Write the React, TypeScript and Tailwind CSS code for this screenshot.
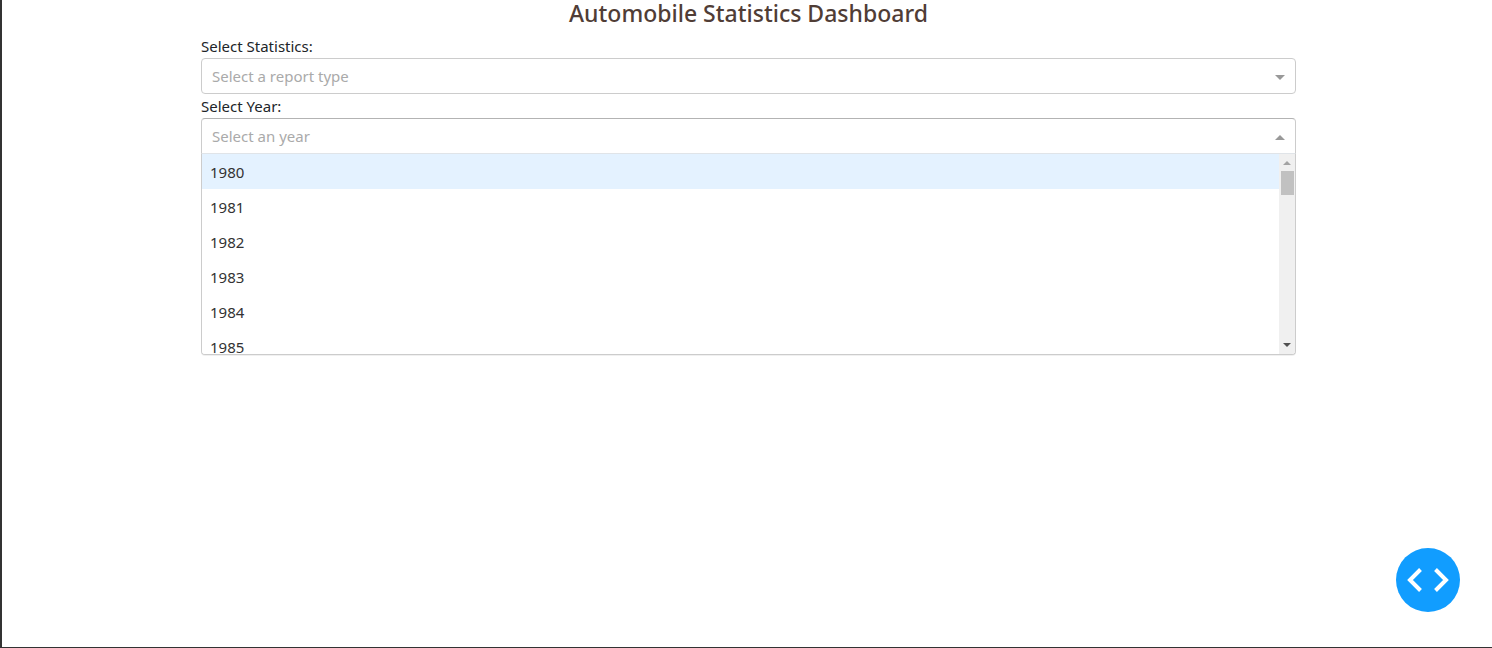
import { useState } from "react";

const YEARS = Array.from({ length: 34 }, (_, i) => String(1980 + i));
const REPORTS = ["Yearly Statistics", "Recession Period Statistics"];

function Caret({ up = false }: { up?: boolean }) {
  return (
    <svg
      aria-hidden="true"
      viewBox="0 0 10 8"
      className="pointer-events-none h-2 w-[10px] shrink-0 fill-[#999999]"
    >
      <path d={up ? "M0 8 5 3 10 8Z" : "M0 3 5 8 10 3Z"} />
    </svg>
  );
}

function ScrollTrack() {
  return (
    <div aria-hidden="true" className="flex w-4 shrink-0 flex-col items-center bg-[#f0f0f0] pt-[7px] pb-[7px]">
      <svg viewBox="0 0 8 4" className="h-1 w-2 shrink-0 fill-[#a3a3a3]">
        <path d="M0 4 4 0 8 4Z" />
      </svg>
      <div className="mt-[6px] h-6 w-[13px] shrink-0 bg-[#c1c1c1]" />
      <svg viewBox="0 0 8 4" className="mt-auto h-1 w-2 shrink-0 fill-[#505050]">
        <path d="M0 0 4 4 8 0Z" />
      </svg>
    </div>
  );
}

export default function App() {
  const [report, setReport] = useState("");
  const [year, setYear] = useState("");
  const [open, setOpen] = useState(true);
  const [active, setActive] = useState("1980");

  return (
    <div className="flex min-h-screen flex-col border-b border-l-2 border-[#333333] bg-white font-['Noto_Sans',sans-serif] text-[15px] leading-6 text-[#212529]">
      <main className="flex flex-col pr-[196px] pl-[199px]">
        <h1 className="mb-2 text-center text-[23px] leading-[26px] font-medium text-[#503d36]">
          Automobile Statistics Dashboard
        </h1>

        <label htmlFor="report">Select Statistics:</label>
        <div className="flex h-9 items-center rounded border border-[#cccccc] pr-[10px]">
          <select
            id="report"
            value={report}
            onChange={(e) => setReport(e.target.value)}
            className={`-mr-[10px] h-full min-w-0 flex-1 appearance-none bg-transparent px-[10px] outline-none ${report ? "text-[#333333]" : "text-[#aaaaaa]"}`}
          >
            <option value="" hidden>
              Select a report type
            </option>
            {REPORTS.map((r) => (
              <option key={r}>{r}</option>
            ))}
          </select>
          <Caret />
        </div>

        <label htmlFor="year">Select Year:</label>
        <div className="relative">
          <div
            className={`flex h-9 items-center border border-[#cccccc] border-t-[#b3b3b3] pr-[10px] ${open ? "rounded-t border-b-[#e0e4e8]" : "rounded"}`}
          >
            <input
              id="year"
              role="combobox"
              aria-expanded={open}
              aria-controls="year-options"
              readOnly
              value={year}
              placeholder="Select an year"
              onClick={() => setOpen(!open)}
              className="h-full min-w-0 flex-1 px-[10px] outline-none placeholder:text-[#aaaaaa]"
            />
            <Caret up={open} />
          </div>
          {open && (
            <div className="absolute inset-x-0 top-full flex h-[201px] overflow-hidden rounded-b border border-t-0 border-[#cccccc] bg-white shadow-[0_1px_0_rgba(0,0,0,0.06)]">
              <ul
                id="year-options"
                role="listbox"
                aria-label="Year"
                className="min-w-0 flex-1 overflow-y-auto text-[#333333] [scrollbar-width:none]"
              >
                {YEARS.map((y) => (
                  <li
                    key={y}
                    role="option"
                    aria-selected={y === year}
                    onMouseEnter={() => setActive(y)}
                    onClick={() => {
                      setYear(y);
                      setOpen(false);
                    }}
                    className={`flex h-[35px] items-center px-2 ${y === active ? "bg-[#e4f2ff]" : "bg-white"}`}
                  >
                    {y}
                  </li>
                ))}
              </ul>
              <ScrollTrack />
            </div>
          )}
        </div>
      </main>

      <button
        type="button"
        aria-label="Toggle developer tools"
        className="fixed right-8 bottom-9 flex size-16 items-center justify-center rounded-full bg-[#119dff]"
      >
        <svg viewBox="0 0 42 26" className="h-[26px] w-[42px] fill-none stroke-white stroke-[4]">
          <path d="M13.5 2.5 3 13 13.5 23.5M28.5 2.5 39 13 28.5 23.5" />
        </svg>
      </button>
    </div>
  );
}
